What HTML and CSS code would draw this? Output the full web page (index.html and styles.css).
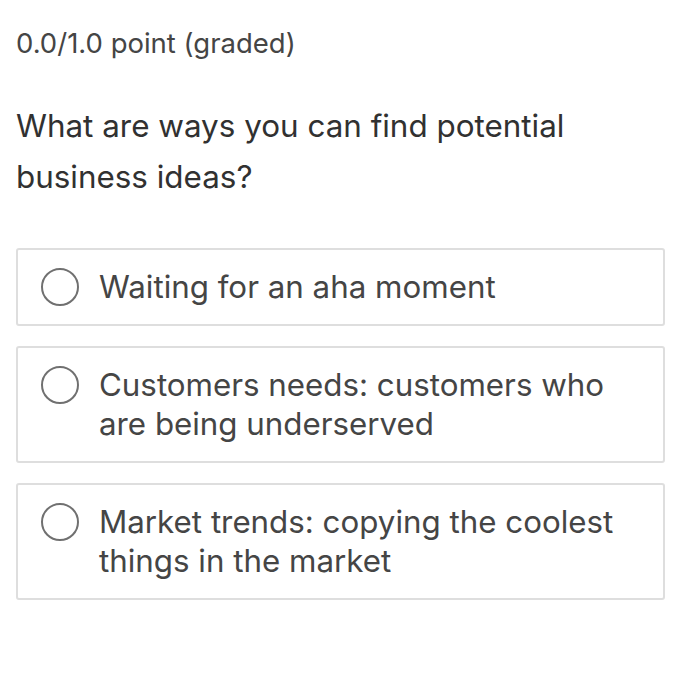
FILE: index.html
```html
<!DOCTYPE html>
<html>
<head>
<meta charset="utf-8">
<link rel="stylesheet" href="styles.css">
</head>
<body>
<div class="problem">
  <div class="score">0.0/1.0 point (graded)</div>
  <p class="question">What are ways you can find potential business ideas?</p>
  <div class="options">
    <label class="option">
      <span class="radio"></span>
      <span class="text">Waiting for an aha moment</span>
    </label>
    <label class="option">
      <span class="radio"></span>
      <span class="text">Customers needs: customers who are being underserved</span>
    </label>
    <label class="option">
      <span class="radio"></span>
      <span class="text">Market trends: copying the coolest things in the market</span>
    </label>
  </div>
</div>
</body>
</html>
```

FILE: styles.css
```css
html, body {
  margin: 0;
  padding: 0;
  background: #fff;
}
body {
  font-family: Inter, "Noto Sans", sans-serif;
  color: #313131;
}
.problem {
  padding: 25px 35px 0 16px;
}
.score {
  font-size: 27.5px;
  line-height: 36px;
  color: #454545;
}
.question {
  margin: 40px 0 0 0;
  font-size: 31.4px;
  line-height: 51px;
  color: #313131;
}
.options {
  margin-top: 45px;
  display: flex;
  flex-direction: column;
  gap: 20px;
}
.option {
  display: flex;
  align-items: flex-start;
  border: 2px solid #dedede;
  border-radius: 3px;
  padding: 18px 20px 17px 23px;
}
.radio {
  flex: none;
  width: 38px;
  height: 38px;
  border: 2px solid #707070;
  border-radius: 50%;
  box-sizing: border-box;
  margin-top: 0;
  margin-right: 20px;
}
.text {
  font-size: 31.3px;
  line-height: 39px;
  color: #454545;
}
```
